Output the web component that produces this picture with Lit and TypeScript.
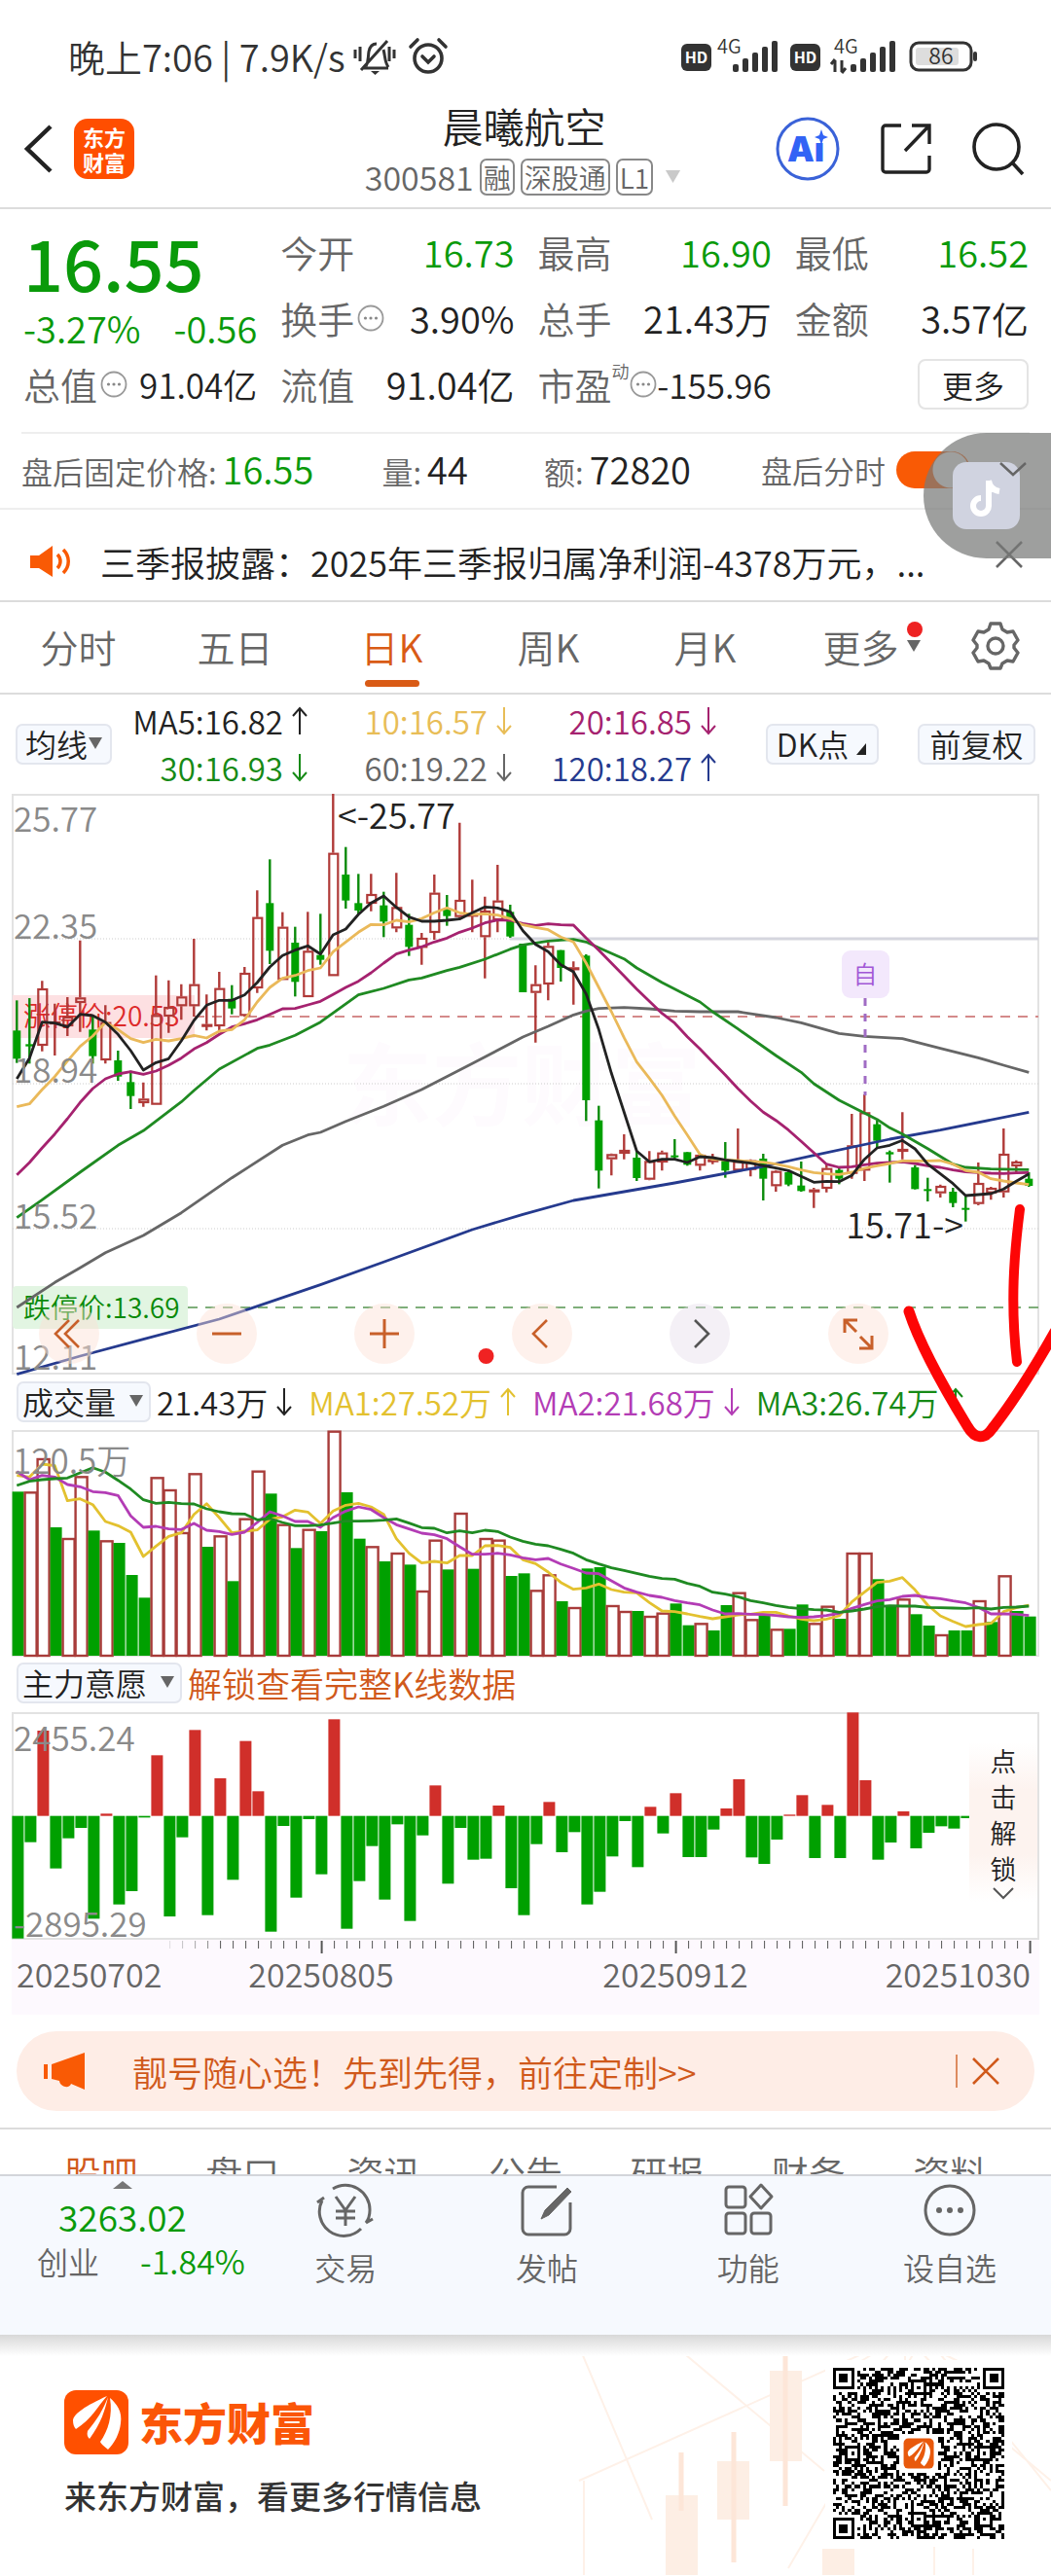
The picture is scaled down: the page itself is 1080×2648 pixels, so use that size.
import { LitElement, html, svg, css } from "lit";
import { customElement } from "lit/decorators.js";

type Candle = [kind: "R" | "G", high: number, top: number, bottom: number, low: number];
type Point = [index: number, y: number];

const PITCH = 13;
const FIRST_X = 17;
const cx = (i: number) => FIRST_X + 0.3 + PITCH * i;

/* Candles, in thirds of a pixel below y = 810. */
const CANDLES: Candle[] = [
  ["G", 655, 748, 835, 848], ["G", 648, 790, 797, 850], ["R", 595, 618, 795, 812], ["R", 665, 720, 728, 825],
  ["R", 645, 705, 735, 765], ["R", 470, 646, 663, 752], ["G", 705, 745, 827, 850], ["R", 670, 722, 840, 850],
  ["G", 810, 840, 890, 903], ["G", 872, 907, 950, 990], ["R", 908, 958, 972, 983], ["R", 578, 700, 977, 977],
  ["R", 593, 675, 705, 755], ["R", 605, 643, 673, 715], ["R", 465, 605, 673, 705], ["R", 637, 728, 735, 748],
  ["R", 567, 617, 735, 750], ["G", 608, 650, 680, 698], ["R", 552, 570, 703, 706], ["R", 316, 398, 618, 632],
  ["G", 220, 355, 502, 543], ["R", 383, 428, 592, 592], ["G", 428, 477, 598, 643], ["R", 382, 502, 645, 645],
  ["G", 388, 515, 530, 545], ["R", 18, 200, 580, 580], ["G", 182, 267, 347, 372], ["G", 265, 355, 378, 388],
  ["R", 265, 327, 357, 380], ["G", 320, 362, 412, 460], ["R", 262, 367, 433, 445], ["G", 388, 422, 490, 518],
  ["R", 447, 462, 493, 545], ["R", 267, 323, 447, 468], ["G", 330, 372, 395, 425], ["R", 107, 345, 398, 405],
  ["R", 283, 388, 394, 445], ["R", 335, 378, 460, 587], ["R", 237, 347, 408, 445], ["G", 360, 382, 458, 462],
  ["G", 480, 480, 630, 630], ["R", 547, 605, 632, 785], ["R", 475, 487, 606, 655], ["G", 500, 500, 555, 597],
  ["R", 535, 553, 559, 668], ["G", 513, 517, 963, 1027], ["G", 980, 1025, 1180, 1235], ["R", 1127, 1129, 1145, 1195],
  ["R", 1068, 1116, 1128, 1145], ["G", 1120, 1140, 1203, 1212], ["R", 1120, 1150, 1208, 1210], ["R", 1118, 1124, 1155, 1180],
  ["G", 1083, 1133, 1138, 1145], ["G", 1123, 1123, 1162, 1165], ["R", 1127, 1131, 1165, 1180], ["R", 1128, 1145, 1152, 1160],
  ["G", 1092, 1150, 1180, 1202], ["R", 1050, 1150, 1180, 1182], ["R", 1145, 1148, 1178, 1198], ["G", 1128, 1143, 1205, 1272],
  ["R", 1178, 1181, 1228, 1245], ["G", 1180, 1185, 1223, 1228], ["G", 1152, 1226, 1243, 1245], ["R", 1233, 1238, 1246, 1295],
  ["R", 1158, 1172, 1236, 1247], ["G", 1170, 1178, 1205, 1222], ["R", 1005, 1102, 1190, 1205], ["R", 945, 1000, 1180, 1212],
  ["G", 1025, 1037, 1088, 1110], ["G", 1118, 1123, 1130, 1217], ["R", 1000, 1113, 1121, 1145], ["G", 1163, 1170, 1237, 1238],
  ["G", 1202, 1237, 1242, 1275], ["R", 1223, 1227, 1250, 1263], ["G", 1233, 1245, 1280, 1293], ["G", 1258, 1295, 1300, 1337],
  ["R", 1155, 1218, 1283, 1287], ["R", 1230, 1233, 1250, 1270], ["R", 1050, 1128, 1247, 1263], ["R", 1148, 1152, 1167, 1185],
  ["G", 1185, 1205, 1227, 1230],
];

const seq = (values: number[]): Point[] => values.map((v, i) => [i, v]);

const MA5 = seq([
  897, 833, 722, 725, 737, 698, 702, 722, 760, 810, 870, 847, 835, 780, 717, 670, 655, 655, 638, 600, 552, 517, 500, 487,
  512, 453, 435, 390, 355, 333, 368, 398, 411, 411, 408, 404, 385, 367, 370, 382, 440, 482, 505, 545, 567, 635, 745, 880,
  1000, 1120, 1153, 1145, 1145, 1155, 1137, 1140, 1147, 1152, 1157, 1165, 1172, 1180, 1198, 1216, 1213, 1214, 1195, 1145,
  1110, 1102, 1087, 1113, 1160, 1190, 1220, 1257, 1254, 1251, 1237, 1213, 1190,
]);
const MA10 = seq([
  983, 974, 930, 890, 842, 797, 765, 723, 745, 773, 785, 775, 780, 773, 763, 771, 750, 745, 715, 660, 615, 587, 578, 563,
  555, 505, 475, 445, 421, 422, 408, 413, 403, 385, 370, 385, 390, 388, 392, 403, 422, 430, 437, 460, 475, 540, 615, 690,
  770, 845, 895, 948, 1012, 1070, 1130, 1145, 1147, 1149, 1152, 1154, 1160, 1168, 1178, 1186, 1190, 1192, 1185, 1173,
  1165, 1158, 1150, 1150, 1150, 1149, 1160, 1180, 1185, 1205, 1212, 1218, 1223,
]);
const MA20 = seq([
  1193, 1155, 1110, 1067, 1020, 970, 927, 897, 882, 875, 883, 873, 855, 833, 805, 785, 760, 737, 727, 715, 698, 681, 680,
  669, 658, 637, 615, 596, 570, 540, 512, 500, 490, 475, 463, 445, 432, 416, 407, 408, 418, 424, 419, 422, 423, 463, 500,
  540, 580, 620, 658, 695, 725, 767, 805, 845, 885, 927, 965, 1000, 1025, 1055, 1090, 1125, 1160, 1170, 1168, 1162, 1157,
  1155, 1153, 1158, 1165, 1170, 1178, 1184, 1186, 1188, 1189, 1187, 1186,
]);
const MA30: Point[] = [
  [0, 1325], [2, 1270], [5, 1185], [8, 1102], [10, 1057], [13, 968], [14, 933], [16, 867], [19, 803], [20, 793], [22, 763],
  [24, 722], [27, 638], [29, 618], [31, 592], [32, 586], [34, 563], [35, 553], [37, 528], [39, 497], [40, 484], [41, 478],
  [42, 472], [43, 469], [44, 467], [45, 475], [46, 493], [48, 527], [49, 555], [51, 600], [54, 660], [55, 690], [57, 743],
  [60, 825], [62, 877], [63, 912], [65, 963], [68, 1022], [69, 1048], [70, 1067], [72, 1112], [74, 1160], [75, 1170],
  [77, 1175], [80, 1177],
];
const MA60: Point[] = [
  [0, 1602], [3, 1525], [5, 1480], [7, 1433], [10, 1380], [13, 1310], [17, 1202], [21, 1102], [23, 1070], [24, 1062],
  [26, 1028], [29, 982], [32, 930], [36, 850], [40, 768], [42, 735], [44, 700], [45, 688], [46, 680], [48, 677], [50, 681],
  [52, 688], [54, 690], [57, 690], [60, 708], [62, 724], [65, 757], [67, 766], [70, 773], [73, 803], [76, 832], [78, 855],
  [80, 877],
];
const MA120: Point[] = [
  [0, 1808], [5, 1752], [10, 1700], [16, 1638], [24, 1532], [29, 1462], [36, 1362], [40, 1315], [44, 1272], [52, 1218],
  [59, 1167], [63, 1133], [69, 1083], [73, 1055], [80, 1000],
];

/* Volume tops, in thirds of a pixel below y = 1400. */
const VOLUME =
  "G400 R400 R297 G510 R543 R352 G520 R550 G558 G657 G727 R355 R393 R525 R343 G570 R535 G676 R482 R335 G406 R500 G574 R515 G522 R212 G402 G545 R568 G615 R588 G625 R705 R548 G640 R465 G638 R543 R548 G660 G652 R703 R655 G738 R756 G637 G633 R750 R768 G768 R783 R773 G745 G812 R805 G828 G750 R710 R793 G778 R823 G823 G748 R805 R752 G792 R588 R588 G670 G752 R730 G778 G813 R840 G828 G828 R735 G802 R658 G768 G785"
    .split(" ")
    .map((s) => ({ kind: s[0], top: Number(s.slice(1)) }));

const VMA1 = seq([
  350, 355, 315, 320, 428, 422, 440, 492, 505, 525, 600, 568, 538, 527, 470, 437, 480, 527, 522, 518, 485, 478, 457, 463,
  498, 460, 442, 436, 447, 470, 545, 590, 620, 615, 620, 597, 597, 567, 566, 572, 610, 622, 648, 680, 701, 697, 685, 702,
  710, 712, 742, 768, 770, 777, 785, 792, 786, 780, 778, 772, 772, 783, 793, 798, 793, 783, 740, 710, 680, 676, 665, 703,
  750, 783, 800, 816, 810, 806, 770, 758, 750,
]);
const VMA2 = seq([
  338, 363, 350, 355, 378, 385, 400, 403, 412, 475, 510, 507, 515, 517, 498, 519, 523, 532, 525, 495, 462, 475, 492, 492,
  510, 480, 460, 447, 455, 480, 502, 515, 528, 533, 545, 570, 593, 593, 590, 595, 604, 610, 606, 623, 637, 651, 653, 675,
  697, 710, 720, 726, 736, 743, 749, 765, 777, 776, 778, 779, 782, 786, 788, 786, 782, 775, 760, 748, 737, 733, 723, 720,
  726, 730, 737, 743, 757, 777, 777, 778, 782,
]);
const VMA3 = seq([
  381, 368, 363, 360, 358, 342, 326, 340, 365, 392, 425, 436, 433, 437, 438, 453, 462, 468, 469, 487, 483, 495, 505, 505,
  503, 497, 491, 491, 490, 488, 484, 497, 511, 513, 527, 521, 527, 519, 523, 540, 553, 562, 567, 578, 590, 610, 623, 635,
  643, 652, 661, 668, 670, 683, 692, 710, 716, 724, 736, 743, 751, 757, 761, 764, 765, 772, 768, 762, 755, 752, 753, 753,
  757, 758, 759, 760, 758, 762, 757, 756, 753,
]);

/* Ends of the capital-flow bars, in thirds of a pixel below y = 1750; the zero line is at 353. */
const FLOW = [
  731, 434, 90, 515, 422, 390, 670, 346, 626, 585, 358, 166, 663, 419, 88, 659, 237, 550, 122, 277, 710, 384, 605, 363, 533,
  55, 701, 554, 446, 611, 379, 677, 413, 259, 562, 390, 488, 485, 321, 576, 659, 440, 310, 465, 403, 626, 587, 478, 369,
  511, 325, 407, 283, 480, 480, 395, 330, 240, 481, 501, 426, 349, 289, 483, 319, 483, 34, 243, 488, 435, 339, 453, 405,
  385, 392, 360,
];

const line = (pts: Point[], base: number, color: string) => svg`
  <polyline points=${pts.map(([i, v]) => `${cx(i).toFixed(1)},${(base + v / 3).toFixed(1)}`).join(" ")}
    fill="none" stroke=${color} stroke-width="2.8" stroke-linejoin="round"></polyline>`;

const arrow = (up: boolean) => html`<svg class="arrow" viewBox="0 0 18 30" aria-hidden="true">
  <path d=${up ? "M9 29V2M2 10l7-8 7 8" : "M9 1v27M2 20l7 8 7-8"} fill="none" stroke="currentColor" stroke-width="2"></path>
</svg>`;

const caret = html`<svg class="caret" viewBox="0 0 14 12" aria-hidden="true"><path d="M0 0h14L7 12z" fill="#666"></path></svg>`;

const info = html`<svg class="info" viewBox="0 0 28 28" role="img" aria-label="说明">
  <circle cx="14" cy="14" r="12.5" fill="none" stroke="#999" stroke-width="1.8"></circle>
  <circle cx="8.5" cy="14" r="1.6" fill="#888"></circle><circle cx="14" cy="14" r="1.6" fill="#888"></circle><circle cx="19.5" cy="14" r="1.6" fill="#888"></circle>
</svg>`;

const cross = html`<svg class="cross" viewBox="0 0 28 28" aria-hidden="true">
  <path d="M1 1l26 26M27 1L1 27" fill="none" stroke="currentColor" stroke-width="2.6"></path>
</svg>`;

const mark = svg`
  <path d="M9 31C10 24 22 16 44 6 34 17 28 30 12 40 10 38 9 35 9 31Z" fill="#fff"></path>
  <path d="M45 7C42 20 38 34 26 50 24 48 23 46 24 42 34 30 40 20 45 7Z" fill="#fff"></path>
  <path d="M47 8C54 14 60 22 58 34 57 44 52 54 45 61 42 58 38 56 37 53 45 42 50 26 47 8Z" fill="#fff"></path>`;

const QR_SIZE = 57;
const qrPath = (() => {
  let seed = 20251030;
  const rnd = () => {
    seed = (seed * 1103515245 + 12345) & 0x7fffffff;
    return seed / 0x7fffffff;
  };
  const ring = (x: number, y: number, ox: number, oy: number, r: number) => {
    const d = Math.max(Math.abs(x - ox), Math.abs(y - oy));
    return d > r ? null : r === 3 || r === 4 ? d !== 2 && d !== 4 : d !== 1;
  };
  const aligns = [[28, 6], [6, 28], [50, 28], [28, 50], [50, 50]];
  let d = "";
  for (let y = 0; y < QR_SIZE; y++) {
    for (let x = 0; x < QR_SIZE; x++) {
      let on: boolean = rnd() < 0.5;
      if (x === 6 || y === 6) on = (x + y) % 2 === 0;
      for (const [ax, ay] of aligns) on = ring(x, y, ax, ay, 2) ?? on;
      for (const [fx, fy] of [[3, 3], [53, 3], [3, 53]]) on = ring(x, y, fx, fy, 4) ?? on;
      if (Math.max(Math.abs(x - 28), Math.abs(y - 28)) <= 6) on = false;
      if (on) d += `M${x} ${y}h1v1h-1z`;
    }
  }
  return d;
})();

const signal = (x: number) =>
  [0, 1, 2, 3, 4].map((k) => svg`<rect x=${x + k * 10} y=${28 - 6 - k * 6} width="6" height=${8 + k * 6} rx="2"></rect>`);

@customElement("app-root")
export class AppRoot extends LitElement {
  static styles = css`
    :host { display: block; position: relative; overflow: hidden; background: #fff; color: #222;
      font-family: "Noto Sans CJK SC", "Liberation Sans", sans-serif; font-weight: 350; font-size: 32px; line-height: 48px; }
    * { box-sizing: border-box; }
    svg { display: block; flex: none; overflow: visible; }
    button, select, input { font: inherit; color: inherit; margin: 0; }
    button { background: none; border: 0; padding: 0; cursor: pointer; white-space: nowrap; }
    a { color: inherit; text-decoration: none; }
    dl, dd, dt, p, h1, h2 { margin: 0; font-weight: inherit; }
    .green { color: #0a9a0a; }
    .arrow { width: 18px; height: 30px; }
    .caret { width: 14px; height: 12px; }
    .info { width: 28px; height: 28px; }
    .cross { width: 28px; height: 28px; }

    .status { display: flex; justify-content: space-between; align-items: center; height: 100px; padding: 16px 74px 0 70px; font-size: 38px; color: #333; }
    .status-left { display: flex; align-items: center; gap: 8px; white-space: pre; }
    .bell { width: 44px; height: 40px; }
    .alarm { width: 42px; height: 40px; margin-left: 4px; }
    .signals { width: 306px; height: 40px; font-size: 20px; }

    .head { display: grid; grid-template-columns: 1fr auto 1fr; align-items: center; height: 115px; padding: 0 27px 8px 24px; border-bottom: 2px solid #dcdcdc; }
    .head-left { display: flex; align-items: center; gap: 22px; }
    .head-right { display: flex; align-items: center; justify-content: flex-end; gap: 41px; }
    .app { display: grid; place-content: center; width: 62px; height: 62px; border-radius: 14px; background: #ff4e00; color: #fff; font-size: 22px; font-weight: 700; line-height: 26px; text-align: center; }
    .title { display: flex; flex-direction: column; align-items: center; gap: 10px; }
    .title h1 { font-size: 42px; line-height: 48px; }
    .sub { display: flex; align-items: center; gap: 6px; color: #666; font-size: 34px; line-height: 38px; }
    .tag { border: 2px solid #888; border-radius: 7px; padding: 0 2px; font-size: 28px; line-height: 34px; }
    .sub .caret { width: 21px; height: 13px; margin-left: 4px; opacity: .35; }

    .quote { display: grid; grid-template-columns: repeat(4, 1fr); grid-auto-rows: 68px; column-gap: 24px; padding: 10px 23px 15px 24px; font-size: 38px; }
    .price { grid-row: span 2; padding-top: 4px; white-space: nowrap; }
    .price-big { font-size: 72px; line-height: 80px; font-weight: 500; margin-bottom: 4px; }
    .price-sub { display: flex; justify-content: space-between; }
    .cell { display: flex; align-items: center; justify-content: space-between; white-space: nowrap; }
    .cell dt { display: flex; align-items: center; gap: 3px; color: #666; font-size: 38px; }
    .cell sup { align-self: flex-start; font-size: 18px; line-height: 20px; margin: 0 -3px; }
    .cell-tight dd { font-size: 35px; }
    .more { justify-self: end; align-self: center; width: 114px; height: 52px; border: 2px solid #e4e4e4; border-radius: 8px; font-size: 32px; }

    .after { display: grid; grid-template-columns: 369fr 166fr 222fr 139fr 136fr; align-items: center; height: 78px; margin: 0 22px; padding-bottom: 2px; border-top: 2px solid #eee; color: #666; white-space: nowrap; }
    .after b { font-weight: inherit; font-size: 38px; margin-left: 6px; color: #222; }
    .after b.green { color: #0a9a0a; }
    .toggle { appearance: none; width: 76px; height: 38px; border-radius: 19px; background: radial-gradient(circle at 56px 19px, #fff 18px, #f95a05 19px); }
    .news { display: flex; align-items: center; gap: 29px; height: 97px; padding: 12px 29px 0 30px; border-top: 2px solid #eee; border-bottom: 2px solid #dcdcdc; font-size: 36px; }
    .news a { flex: 1; min-width: 0; white-space: nowrap; }
    .news button { color: #666; margin-bottom: 14px; }
    .speaker { width: 44px; height: 36px; }

    .tabs { display: grid; grid-template-columns: repeat(6, 161fr) 114fr; height: 95px; border-bottom: 2px solid #dcdcdc; font-size: 39px; color: #666; }
    .tabs button { position: relative; display: flex; align-items: center; justify-content: center; gap: 8px; padding-bottom: 4px; }
    .tabs .on { color: #d95b16; }
    .tabs .on::after { content: ""; position: absolute; bottom: 6px; width: 56px; height: 7px; border-radius: 4px; background: #d95b16; }
    .tabs .dot { position: absolute; top: 20px; right: 18px; width: 16px; height: 16px; border-radius: 50%; background: #ee2222; }
    .tabs .tab-more { padding-left: 20px; }

    .chip { display: inline-flex; align-items: center; justify-content: center; height: 42px; padding: 0 4px 2px; border: 2px solid #e3e6ee; border-radius: 7px; background: #f6f9fe; white-space: nowrap; }
    .chip select { appearance: none; background: none; border: 0; padding: 0; width: auto; line-height: 38px; }
    .averages { display: grid; grid-template-columns: 99fr 202fr 210fr 210fr 50fr 116fr 40fr 121fr; align-items: center; height: 102px; padding: 0 16px; }
    .averages .pair { display: grid; grid-template-rows: 48px 48px; justify-items: end; font-size: 33px; }
    .ma { display: inline-flex; align-items: center; gap: 8px; white-space: nowrap; }
    .averages .k-first { grid-column: 6; }
    .averages .k-last { grid-column: 8; }

    .charts { position: relative; }
    .chart { position: relative; }
    .chart > svg { width: 100%; height: auto; }
    .axis { font-size: 35px; fill: #8a8a8a; }
    .note { font-size: 36px; fill: #222; }
    .limit { font-size: 28px; }
    .date { font-size: 34px; fill: #666; }
    .tools { position: absolute; left: 0; right: 0; bottom: 11px; display: flex; justify-content: space-between; padding: 0 15.5% 0 3.7%; }
    .tools button { width: 62px; height: 62px; border-radius: 50%; background: rgba(252, 224, 212, .45); color: #c8602a; }
    .tools svg { width: 62px; height: 62px; }
    .tools .flat { background: rgba(230, 222, 236, .45); color: #555; }
    .strip { display: flex; align-items: center; gap: 6px; height: 57px; padding: 0 17px 2px; }
    .strip .chip { gap: 13px; padding-right: 6px; }
    .strip .ma { margin-right: 10px; font-size: 33px; }
    .strip .flow-title { color: #d0591b; font-size: 35px; }
    .flow-head { height: 56px; }
    .unlock { position: absolute; right: 14px; top: 32px; width: 70px; font-size: 27px; line-height: 37px; background: linear-gradient(#fff, #fdf3ef 30%, #fdf3ef 70%, #fff); color: #222; white-space: normal; padding: 0 20px; }
    .unlock span { display: block; }
    .scribble { position: absolute; inset: 0; width: 100%; pointer-events: none; }

    .promo { display: flex; align-items: center; height: 82px; margin: 15px 17px 17px; padding: 0 36px 0 28px; border-radius: 41px; background: #feede6; color: #d0591b; font-size: 36px; }
    .promo a { flex: 1; padding-left: 49px; white-space: nowrap; }
    .promo button { padding-left: 15px; border-left: 2px solid #dd8b60; height: 34px; }
    .sections { display: grid; grid-template-columns: repeat(7, 1fr); height: 48px; padding: 16px 31px 0; overflow: hidden; border-top: 2px solid #dcdcdc; font-size: 38px; line-height: 56px; color: #666; }
    .sections button { align-self: start; }
    .sections .on { color: #d0591b; }

    .dock { position: relative; display: grid; grid-template-columns: 251fr 207fr 207fr 207fr 208fr; height: 165px; padding-top: 5px; border-top: 2px solid #d3d5da; background: #f6f9fe; color: #666; }
    .index { padding-left: 38px; }
    .index-caret { width: 20px; height: 8px; margin-left: 78px; }
    .index-value { padding-left: 22px; font-size: 37px; line-height: 56px; }
    .index-row { display: flex; gap: 42px; line-height: 36px; white-space: nowrap; }
    .index-row .green { font-size: 34px; }
    .dock a { display: flex; flex-direction: column; align-items: center; gap: 4px; }
    .dock a svg { width: 60px; height: 60px; }

    .foot { position: relative; display: flex; justify-content: space-between; height: 247px; padding: 34px 48px 0 66px; overflow: hidden; }
    .foot::before { content: ""; position: absolute; inset: 0 0 auto; height: 22px; background: linear-gradient(#d8d8d8, #fff); z-index: 1; }
    .decor { position: absolute; right: 0; top: 0; width: 500px; height: 247px; }
    .brand { display: flex; align-items: center; gap: 11px; margin-top: 23px; color: #fb5607; font-size: 45px; font-weight: 900; line-height: 66px; }
    .brand svg { width: 66px; height: 66px; }
    .slogan { margin-top: 18px; font-size: 33px; font-weight: 500; color: #333; }
    .qr { position: relative; width: 176px; height: 176px; box-shadow: 0 0 0 8px #fff; background: #fff; }

    .float { position: absolute; right: 0; top: 445px; width: 131px; height: 129px; border-radius: 65px 0 0 65px; background: rgba(120, 122, 120, .72); }
    .float svg { width: 131px; height: 129px; }
  `;

  private candles() {
    return CANDLES.map(([kind, hi, top, bot, lo], i) => {
      const x = cx(i);
      const y = (v: number) => 810 + v / 3;
      if (kind === "G")
        return svg`<path d=${`M${x} ${y(hi)}V${y(lo)}`} stroke="#0a8a0a" stroke-width="2.4"></path>
          <rect x=${x - 4} y=${y(top)} width="8" height=${Math.max(2, (bot - top) / 3)} fill="#00a000"></rect>`;
      return svg`<path d=${`M${x} ${y(hi)}V${y(top)}M${x} ${y(bot)}V${y(lo)}`} stroke="#b03a38" stroke-width="2.4"></path>
        <rect x=${x - 4} y=${y(top) + 1} width="9" height=${Math.max(1, (bot - top) / 3 - 2)} fill="none" stroke="#b03a38" stroke-width="2.2"></rect>`;
    });
  }

  private priceChart() {
    return html`<svg viewBox="0 816 1080 597" role="img" aria-label="日K线图">
      <text x="352" y="1150" font-size="92" fill="#fefbfe" font-weight="700">东方财富</text>
      <rect x="13" y="817" width="1054" height="595" fill="none" stroke="#e2e2e2" stroke-width="2"></rect>
      <path d="M13 965H1067M13 1114H1067M13 1263H1067" stroke="#ccc" stroke-dasharray="1 2"></path>
      <path d="M524 965H1067" stroke="#d5d6de" stroke-width="3"></path>
      <rect x="13" y="1023" width="187" height="44" fill="#fde0e2"></rect>
      <rect x="13" y="1322" width="180" height="44" rx="4" fill="#e2f5e2"></rect>
      <path d="M200 1045H1067" stroke="#d48a8a" stroke-width="2" stroke-dasharray="10 8"></path>
      <path d="M193 1344H1067" stroke="#7fae7a" stroke-width="2" stroke-dasharray="10 8"></path>
      <text class="limit" x="24" y="1055" fill="#dd2b2b">涨停价:20.53</text>
      <text class="limit" x="24" y="1355" fill="#0a8a0a">跌停价:13.69</text>
      ${this.candles()}
      ${line(MA120, 810, "#253a8e")} ${line(MA60, 810, "#666")} ${line(MA30, 810, "#1f8a22")}
      ${line(MA20, 810, "#a5226f")} ${line(MA10, 810, "#eab95a")} ${line(MA5, 810, "#222")}
      <path d="M889 1026V1126" stroke="#a06cc4" stroke-width="3" stroke-dasharray="8 8"></path>
      <rect x="865" y="977" width="49" height="49" rx="9" fill="#f3e8fc"></rect>
      <text x="889" y="1011" text-anchor="middle" font-size="25" fill="#a257d6">自</text>
      <g class="axis">
        <text x="14" y="855">25.77</text><text x="14" y="965">22.35</text><text x="14" y="1113">18.94</text>
        <text x="14" y="1263">15.52</text><text x="14" y="1408">12.11</text>
      </g>
      <text class="note" x="347" y="852">&lt;-25.77</text>
      <text class="note" x="990" y="1273" text-anchor="end">15.71-&gt;</text>
    </svg>`;
  }

  private volumeChart() {
    return html`<svg viewBox="0 1470 1080 233" role="img" aria-label="成交量">
      <rect x="13" y="1471" width="1054" height="231" fill="none" stroke="#e2e2e2" stroke-width="2"></rect>
      ${VOLUME.map(({ kind, top }, i) => {
        const y = 1400 + top / 3;
        const x = 12.6 + PITCH * i;
        return kind === "G"
          ? svg`<rect x=${x} y=${y} width="12" height=${1702 - y} fill="#00a000"></rect>`
          : svg`<rect x=${x} y=${y + 1} width="12" height=${1701 - y} fill="#fff" stroke="#a83c3a" stroke-width="2.4"></rect>`;
      })}
      ${line(VMA1, 1400, "#e3c12f")} ${line(VMA2, 1400, "#b33cb5")} ${line(VMA3, 1400, "#1f8a22")}
      <text class="axis" x="13" y="1515">120.5万</text>
    </svg>`;
  }

  private flowChart() {
    const zero = 1750 + 353 / 3;
    const ticks = Array.from({ length: 69 }, (_, k) => k + 12);
    return html`<svg viewBox="0 1760 1080 314" role="img" aria-label="主力意愿">
      <rect x="12" y="1995" width="1056" height="77" fill="#fdf9fe"></rect>
      <rect x="13" y="1762" width="1054" height="232" fill="none" stroke="#e2e2e2" stroke-width="2"></rect>
      ${FLOW.map((v, i) => {
        const y = 1750 + v / 3;
        return svg`<rect x=${12.4 + PITCH * i} y=${Math.min(y, zero)} width="12" height=${Math.abs(y - zero)} fill=${v < 353 ? "#d02f2a" : "#00a000"}></rect>`;
      })}
      ${ticks.map((i) => {
        const major = i === 24 || i === 52 || i === 80;
        return svg`<path d=${`M${18.6 + PITCH * i} 1996V${major ? 2009 : 2004}`} stroke="#555" stroke-width=${major ? 2 : 1} opacity=${i < 16 ? (i - 11) / 6 : 1}></path>`;
      })}
      <text class="axis" x="14" y="1801">2455.24</text>
      <text class="axis" x="14" y="1992">-2895.29</text>
      <g class="date">
        <text x="17" y="2044">20250702</text>
        <text x="330" y="2044" text-anchor="middle">20250805</text>
        <text x="694" y="2044" text-anchor="middle">20250912</text>
        <text x="1059" y="2044" text-anchor="end">20251030</text>
      </g>
    </svg>`;
  }

  private stat(label: unknown, value: string, cls = "") {
    return html`<div class="cell"><dt>${label}</dt><dd class=${cls}>${value}</dd></div>`;
  }

  private ma(text: string, up: boolean, color: string) {
    return html`<span class="ma" style="color:${color}">${text}${arrow(up)}</span>`;
  }

  render() {
    return html`
      <div class="status">
        <div class="status-left">晚上7:06 | 7.9K/s<svg class="bell" viewBox="0 0 44 40" fill="none" stroke="#333" stroke-width="3" role="img" aria-label="静音">
            <path d="M9 32h27M13 30c3-5 2-9 3-15 1-5 4-8 8-8M31 13c2 7 1 12 5 18M35 4L8 34M2 13v9M7 10v15M42 13v9M37 10v15"></path>
            <path d="M18 35h9l-4.500 4z" fill="#333" stroke="none"></path>
          </svg><svg class="alarm" viewBox="0 0 42 40" fill="none" stroke="#333" stroke-width="3.6" stroke-linecap="round" role="img" aria-label="闹钟">
            <circle cx="21" cy="22" r="14"></circle><path d="M15 20l6 6 6-6M3 10l7-7M39 10l-7-7"></path>
          </svg></div>
        <svg class="signals" viewBox="0 0 306 40" fill="#333" role="img" aria-label="4G 电量">
          <rect x="0" y="7" width="31" height="28" rx="6"></rect><rect x="112" y="7" width="31" height="28" rx="6"></rect>
          <g font-size="16" font-weight="700" text-anchor="middle" fill="#fff"><text x="15.500" y="27">HD</text><text x="127.500" y="27">HD</text></g>
          <text x="37" y="17">4G</text><text x="157" y="17">4G</text>
          <g transform="translate(53 6)">${signal(0)}</g><g transform="translate(174 6)">${signal(0)}</g>
          <path d="M158 24v12M158 23l-4 5M165 24v12M165 37l4-5" stroke="#333" stroke-width="3"></path>
          <rect x="236" y="6" width="62" height="28" rx="8" fill="none" stroke="#333" stroke-width="3"></rect>
          <rect x="241" y="11" width="44" height="18" rx="3" fill="#ddd"></rect>
          <rect x="300" y="15" width="4" height="10" rx="2"></rect>
          <text x="267" y="28" text-anchor="middle" font-size="23">86</text>
        </svg>
      </div>

      <header class="head">
        <div class="head-left">
          <button aria-label="返回"><svg width="30" height="50" viewBox="0 0 30 50"><path d="M28 2L4 25l24 23" fill="none" stroke="#222" stroke-width="4.500"></path></svg></button>
          <div class="app"><span>东方</span><span>财富</span></div>
        </div>
        <div class="title">
          <h1>晨曦航空</h1>
          <div class="sub">300581 <span class="tag">融</span><span class="tag">深股通</span><span class="tag">L1</span>${caret}</div>
        </div>
        <div class="head-right">
          <button aria-label="Ai">
            <svg width="66" height="66" viewBox="0 0 66 66">
              <circle cx="33" cy="33" r="31" fill="none" stroke="#3a62d8" stroke-width="3"></circle>
              <text x="31" y="46" text-anchor="middle" font-family="Inter, sans-serif" font-weight="900" font-size="35" fill="#3263f5">Aı</text>
              <path d="M47 13l2 6 5 2-5 2-2 6-2-6-5-2 5-2z" fill="#3263f5"></path>
            </svg>
          </button>
          <button aria-label="分享"><svg width="54" height="54" viewBox="0 0 54 54" fill="none" stroke="#222" stroke-width="3.4">
            <path d="M22 3H6a3 3 0 0 0-3 3v42a3 3 0 0 0 3 3h42a3 3 0 0 0 3-3V34M33 3h18v19M51 3L26 29"></path></svg></button>
          <button aria-label="搜索"><svg width="54" height="54" viewBox="0 0 54 54" fill="none" stroke="#222" stroke-width="3.6">
            <circle cx="25" cy="25" r="23"></circle><path d="M41 41l11 12"></path></svg></button>
        </div>
      </header>

      <dl class="quote">
        <div class="price green">
          <dt class="price-big">16.55</dt>
          <dd class="price-sub"><span>-3.27%</span><span>-0.56</span></dd>
        </div>
        ${this.stat("今开", "16.73", "green")} ${this.stat("最高", "16.90", "green")} ${this.stat("最低", "16.52", "green")}
        ${this.stat(html`换手${info}`, "3.90%")} ${this.stat("总手", "21.43万")} ${this.stat("金额", "3.57亿")}
        <div class="cell cell-tight"><dt>总值${info}</dt><dd>91.04亿</dd></div>
        ${this.stat("流值", "91.04亿")}
        <div class="cell cell-tight"><dt>市盈<sup>动</sup>${info}</dt><dd>-155.96</dd></div>
        <button class="more">更多</button>
      </dl>

      <div class="after">
        <span>盘后固定价格:<b class="green">16.55</b></span><span>量:<b>44</b></span><span>额:<b>72820</b></span>
        <label for="after-toggle">盘后分时</label><input id="after-toggle" class="toggle" type="checkbox" checked>
      </div>

      <div class="news">
        <svg class="speaker" viewBox="0 0 44 36" aria-hidden="true"><path d="M1 12h9L24 2v32L10 25H1z" fill="#f95a05"></path>
          <path d="M29 11c4 4 4 10 0 14M35 6c7 7 7 17 0 24" fill="none" stroke="#f95a05" stroke-width="3.500"></path></svg>
        <a href="#news">三季报披露：2025年三季报归属净利润-4378万元，...</a>
        <button aria-label="关闭">${cross}</button>
      </div>

      <nav class="tabs">
        <button>分时</button><button>五日</button><button class="on">日K</button><button>周K</button><button>月K</button>
        <button class="tab-more">更多${caret}<i class="dot"></i></button>
        <button aria-label="设置"><svg width="48" height="50" viewBox="0 0 48 50" fill="none" stroke="#666" stroke-width="3.400" stroke-linejoin="round">
          <path d="M19 2h10l2 6 5 3 6-1 5 9-4 5v3l4 5-5 9-6-1-5 3-2 5H19l-2-5-5-3-6 1-5-9 4-5v-3l-4-5 5-9 6 1 5-3z"></path><circle cx="24" cy="25" r="8"></circle></svg></button>
      </nav>

      <div class="averages">
        <span class="chip"><select aria-label="均线"><option>均线</option></select>${caret}</span>
        <div class="pair">${this.ma("MA5:16.82", true, "#222")}${this.ma("30:16.93", false, "#168a16")}</div>
        <div class="pair">${this.ma("10:16.57", false, "#e8bd57")}${this.ma("60:19.22", false, "#666")}</div>
        <div class="pair">${this.ma("20:16.85", false, "#a5226f")}${this.ma("120:18.27", true, "#253a8e")}</div>
        <button class="chip k-first">DK点<svg width="20" height="24" viewBox="0 0 20 24"><path d="M18 12v12H8z" fill="#222"></path></svg></button>
        <button class="chip k-last">前复权</button>
      </div>

      <section class="charts">
        <div class="chart">
          ${this.priceChart()}
          <div class="tools">
            <button aria-label="最左"><svg viewBox="0 0 62 62" fill="none" stroke="currentColor" stroke-width="2.6"><path d="M31 17L17 31l14 14M41 17L27 31l14 14"></path></svg></button>
            <button aria-label="缩小"><svg viewBox="0 0 62 62" stroke="currentColor" stroke-width="3"><path d="M16 31h30"></path></svg></button>
            <button aria-label="放大"><svg viewBox="0 0 62 62" stroke="currentColor" stroke-width="3"><path d="M16 31h30M31 16v30"></path></svg></button>
            <button aria-label="左移"><svg viewBox="0 0 62 62" fill="none" stroke="currentColor" stroke-width="2.6"><path d="M36 17L22 31l14 14"></path></svg></button>
            <button class="flat" aria-label="右移"><svg viewBox="0 0 62 62" fill="none" stroke="currentColor" stroke-width="2.6"><path d="M26 17l14 14-14 14"></path></svg></button>
            <button aria-label="全屏"><svg viewBox="0 0 62 62" fill="none" stroke="currentColor" stroke-width="3"><path d="M17 30V17h13M17 17l12 12M45 33v13H32M45 46L33 34"></path></svg></button>
          </div>
        </div>
        <div class="strip">
          <span class="chip"><select aria-label="指标"><option>成交量</option></select>${caret}</span>
          ${this.ma("21.43万", false, "#222")} ${this.ma("MA1:27.52万", true, "#e3c12f")}
          ${this.ma("MA2:21.68万", false, "#b33cb5")} ${this.ma("MA3:26.74万", true, "#168a16")}
        </div>
        <div class="chart">${this.volumeChart()}</div>
        <div class="strip flow-head">
          <span class="chip"><select aria-label="副图指标"><option>主力意愿</option></select>${caret}</span>
          <a class="flow-title" href="#unlock">解锁查看完整K线数据</a>
        </div>
        <div class="chart">
          ${this.flowChart()}
          <button class="unlock"><span>点</span><span>击</span><span>解</span><span>锁</span>
            <svg width="30" height="16" viewBox="0 0 30 16"><path d="M5 2l10 10L25 2" fill="none" stroke="#555" stroke-width="2"></path></svg></button>
        </div>
        <svg class="scribble" viewBox="0 816 1080 1258" aria-hidden="true" fill="none" stroke="#fd0505" stroke-linecap="round" stroke-linejoin="round">
          <circle cx="499.500" cy="1394" r="8" fill="#f02222" stroke="none"></circle>
          <path d="M1048 1243C1042 1290 1038 1340 1045 1400" stroke-width="10"></path>
          <path d="M934 1348C946 1385 972 1430 994 1466 1002 1480 1012 1480 1020 1468 1042 1440 1062 1408 1084 1369" stroke-width="11"></path>
        </svg>
      </section>

      <aside class="promo">
        <svg width="42" height="38" viewBox="0 0 42 38" aria-hidden="true" fill="#f95a05"><rect x="0" y="12" width="4" height="15"></rect><path d="M8 12L42 0v38L28 32c-1 5-11 4-12-3l-8-2z"></path></svg>
        <a href="#promo">靓号随心选！先到先得，前往定制&gt;&gt;</a>
        <button aria-label="关闭">${cross}</button>
      </aside>

      <nav class="sections">
        <button class="on">股吧</button>${["盘口", "资讯", "公告", "研报", "财务", "资料"].map((t) => html`<button>${t}</button>`)}
      </nav>

      <nav class="dock">
        <div class="index">
          <svg class="index-caret" viewBox="0 0 20 8"><path d="M0 8L10 0l10 8z" fill="#777"></path></svg>
          <div class="index-value green">3263.02</div>
          <div class="index-row"><span>创业</span><span class="green">-1.84%</span></div>
        </div>
        <a href="#trade"><svg viewBox="0 0 60 60" fill="none" stroke="#666" stroke-width="3"><path d="M17 8a25 25 0 0 1 38 22c0 6-1 9-4 13M51 43l7-4M46 49A25 25 0 0 1 6 20M1 22l7-5M20 16l10 14 10-14M30 30v16M20 31h20M20 38h20"></path></svg>交易</a>
        <a href="#post"><svg viewBox="0 0 60 60" fill="none" stroke="#666" stroke-width="3"><path d="M40 6H11a6 6 0 0 0-6 6v37a6 6 0 0 0 6 6h37a6 6 0 0 0 6-6V22"></path><path d="M24 39l4-9L51 7l4 4-23 24z" fill="#666" stroke-width="1"></path></svg>发帖</a>
        <a href="#features"><svg viewBox="0 0 60 60" fill="none" stroke="#666" stroke-width="3"><rect x="7" y="6" width="20" height="21" rx="3"></rect><rect x="7" y="33" width="20" height="21" rx="3"></rect><rect x="33" y="33" width="20" height="21" rx="3"></rect><path d="M43 4l11 12-11 12-11-12z" stroke-linejoin="round"></path></svg>功能</a>
        <a href="#watch"><svg viewBox="0 0 60 60" fill="none" stroke="#666" stroke-width="3"><circle cx="30" cy="30" r="25"></circle><g fill="#666" stroke="none"><circle cx="19" cy="30" r="3"></circle><circle cx="30" cy="30" r="3"></circle><circle cx="41" cy="30" r="3"></circle></g></svg>设自选</a>
      </nav>

      <footer class="foot">
        <svg class="decor" viewBox="0 0 500 247" fill="none" stroke="#fef1e8" stroke-width="2" aria-hidden="true">
          <path d="M100 0l167 140M15 150L350 0M10 0l80 190M230 240L370 0l130 160M350 0l-50 30M350 0l60 30M350 0v30M350 0l-25 30M350 0l28 30M20 247V150M440 100l60 50M380 200v47M420 220v27"></path>
          <g fill="#fdeee4" stroke="none"><rect x="211" y="37" width="33" height="93"></rect><rect x="157" y="130" width="33" height="60"></rect><rect x="104" y="165" width="33" height="82"></rect><rect x="265" y="220" width="33" height="27"></rect></g>
          <path d="M227 12v164M174 100v134M120 121v60" stroke="#fde6d8" stroke-width="5"></path>
        </svg>
        <div>
          <div class="brand"><svg viewBox="0 0 66 66" aria-hidden="true"><rect width="66" height="66" rx="12" fill="#ff5000"></rect>${mark}</svg>东方财富</div>
          <p class="slogan">来东方财富，看更多行情信息</p>
        </div>
        <svg class="qr" viewBox="0 0 57 57" role="img" aria-label="二维码" shape-rendering="crispEdges">
          <path d=${qrPath} fill="#000"></path>
          <g transform="translate(23.500 23.500) scale(.152)" shape-rendering="auto"><rect width="66" height="66" rx="10" fill="#e8590c"></rect>${mark}</g>
        </svg>
      </footer>

      <div class="float">
        <svg viewBox="0 0 131 129" aria-hidden="true">
          <rect x="30" y="30" width="69" height="69" rx="14" fill="#d0d3e0"></rect>
          <path d="M79 31l13 12 13-12" fill="none" stroke="#666" stroke-width="2.500"></path>
          <path d="M67 49v26a8 8 0 1 1-8-8M67 49c1 7 5 10 11 11" fill="none" stroke="#fff" stroke-width="6"></path>
        </svg>
      </div>
    `;
  }
}
